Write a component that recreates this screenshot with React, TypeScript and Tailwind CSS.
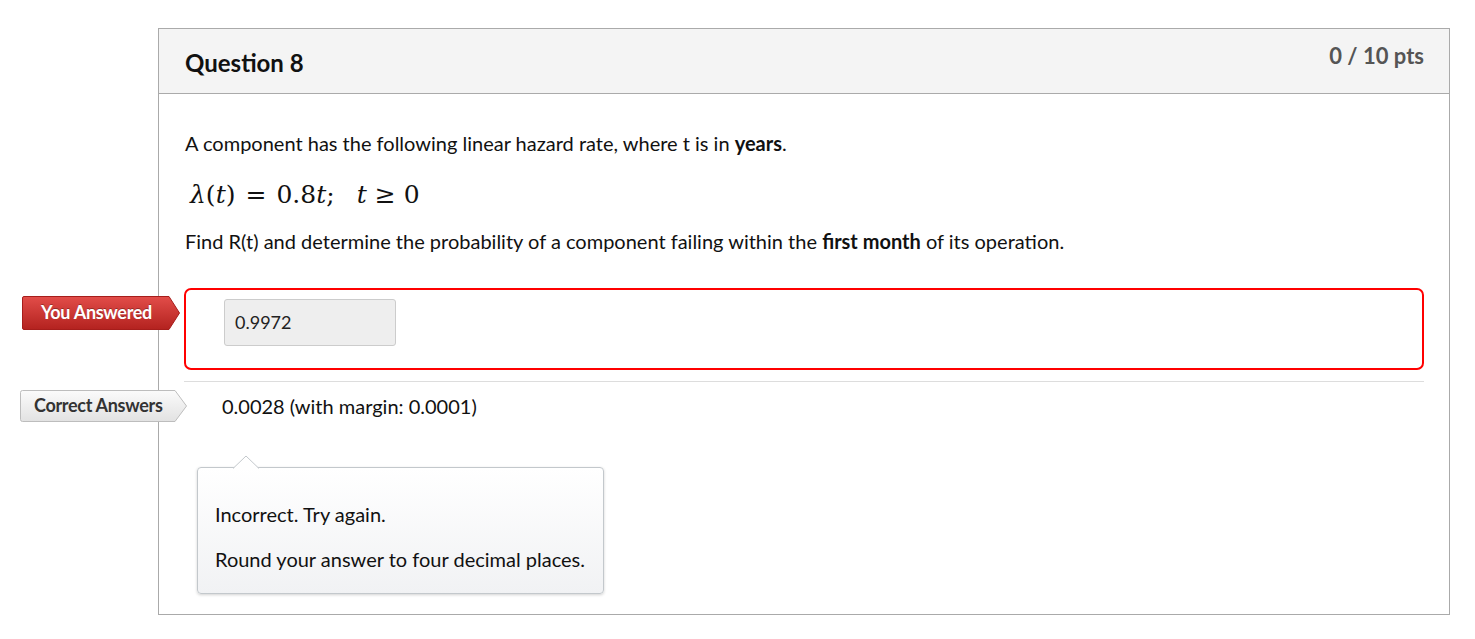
import React from "react";

const lato = { fontFamily: "Lato, 'Open Sans', sans-serif" };

const RedTag: React.FC = () => (
  <div className="absolute left-[-164px] top-[6px] w-[158px] h-[34px]">
    <svg className="absolute inset-0" width="158" height="34" viewBox="0 0 158 34">
      <defs>
        <linearGradient id="redg" x1="0" y1="0" x2="0" y2="1">
          <stop offset="0" stopColor="#e24d49" />
          <stop offset="1" stopColor="#b3221f" />
        </linearGradient>
      </defs>
      <path d="M2 0.5 H147 L157.5 17 L147 33.5 H2 Q0.5 33.5 0.5 32 V2 Q0.5 0.5 2 0.5 Z" fill="url(#redg)" stroke="#a61d1b" strokeWidth="1" />
    </svg>
    <span className="relative block pl-[19px] leading-[32px] text-[18px] font-bold text-white tracking-[-0.3px] [text-shadow:0_-1px_0_rgba(0,0,0,0.3)]">
      You Answered
    </span>
  </div>
);

const GrayTag: React.FC = () => (
  <div className="absolute left-[-164px] top-[8px] w-[168px] h-[32px]">
    <svg className="absolute inset-0" width="168" height="32" viewBox="0 0 168 32">
      <defs>
        <linearGradient id="grayg" x1="0" y1="0" x2="0" y2="1">
          <stop offset="0" stopColor="#fbfbfb" />
          <stop offset="1" stopColor="#e2e2e2" />
        </linearGradient>
      </defs>
      <path d="M2.5 0.5 H155 L166.5 16 L155 31.5 H2.5 Q0.5 31.5 0.5 29.5 V2.5 Q0.5 0.5 2.5 0.5 Z" fill="url(#grayg)" stroke="#bdbdbd" strokeWidth="1" />
    </svg>
    <span className="relative block pl-[14px] leading-[31px] text-[18px] font-bold text-[#333] tracking-[-0.3px]">
      Correct Answers
    </span>
  </div>
);

const App: React.FC = () => {
  return (
    <div className="min-h-[639px] bg-white pt-[28px] text-[#111]" style={lato}>
      <div className="ml-[158px] w-[1292px] border border-[#aaa]">
        <div className="flex h-[65px] justify-between border-b border-[#aaa] bg-[#f4f4f4] pl-[26px] pr-[25px]">
          <h2 className="pt-[18px] text-[24px] font-bold leading-[32px] text-[#111]">Question 8</h2>
          <div className="pt-[12px] text-[22px] font-bold leading-[30px] text-[#555]">0 / 10 pts</div>
        </div>

        <div className="pl-[25px] pr-[25px] pt-[36px] pb-[20px] text-[20px] leading-[27px]">
          <p className="pl-[1px]">
            A component has the following linear hazard rate, where t is in <strong>years</strong>.
          </p>
          <div
            className="mt-[20px] flex h-[36px] items-center pl-[6px] text-[25px] leading-[36px] text-[#111]"
            style={{ fontFamily: "'DejaVu Serif', 'Liberation Serif', serif" }}
          >
            <span>
              <i>λ</i>(<i>t</i>)
            </span>
            <span className="mx-[10px]">=</span>
            <span>
              0.8<i>t</i>;
            </span>
            <span className="ml-[22px]">
              <i>t</i>
            </span>
            <span className="mx-[8px]">≥</span>
            <span>0</span>
          </div>
          <p className="mt-[15px] pl-[1px]">
            Find R(t) and determine the probability of a component failing within the <strong>first month</strong> of its operation.
          </p>

          <div className="relative mt-[33px] h-[82px] rounded-[7px] border-2 border-[#f00] pl-[38px] pt-[9px]">
            <RedTag />
            <div className="flex h-[47px] w-[172px] items-center rounded-[3px] border border-[#ccc] bg-[#eee] pl-[10px] text-[18px] text-[#222]">
              0.9972
            </div>
          </div>

          <div className="mt-[11px] border-t border-[#ddd]" />

          <div className="relative h-[46px] pl-[38px]">
            <GrayTag />
            <div className="pt-[11px] leading-[27px]">0.0028 (with margin: 0.0001)</div>
          </div>

          <div className="relative ml-[13px] mt-[39px] w-[407px]">
            <svg className="absolute left-[36px] top-[-12px]" width="26" height="14" viewBox="0 0 26 14">
              <path d="M0 13.5 L13 1 L26 13.5" fill="#fff" stroke="#c3c8cc" strokeWidth="1" />
            </svg>
            <div className="whitespace-nowrap rounded-[4px] border border-[#c3c8cc] bg-gradient-to-b from-white to-[#f1f2f4] pl-[17px] pr-[10px] pt-[33px] pb-[20px] shadow-[0_1px_3px_rgba(0,0,0,0.18)]">
              <p className="leading-[27px]">Incorrect. Try again.</p>
              <p className="mt-[18px] leading-[27px]">Round your answer to four decimal places.</p>
            </div>
            <div className="absolute left-[37px] top-[1px] h-[2px] w-[24px] bg-white" />
          </div>
        </div>
      </div>
    </div>
  );
};

export default App;
